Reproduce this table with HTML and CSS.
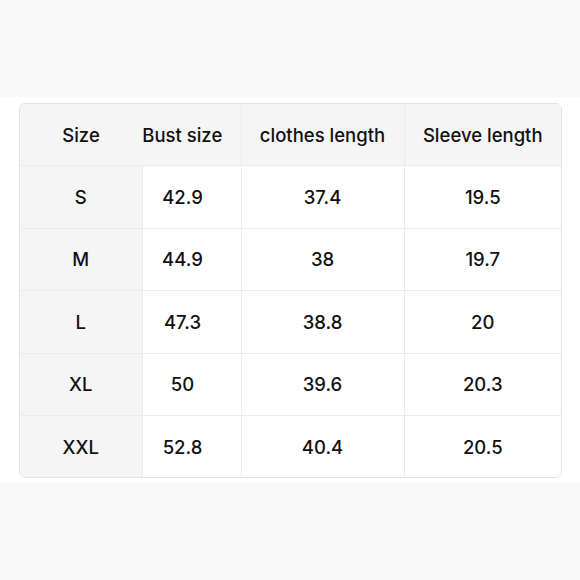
FILE: index.html
```html
<!DOCTYPE html>
<html>
<head>
<meta charset="utf-8">
<link rel="stylesheet" href="styles.css">
</head>
<body>
<div class="band top"></div>
<div class="sheet">
  <div class="frame">
    <table class="chart">
      <colgroup>
        <col class="c1"><col class="c2"><col class="c3"><col class="c4">
      </colgroup>
      <thead>
        <tr><th class="lead">Size</th><th class="bust">Bust size</th><th>clothes length</th><th class="last">Sleeve length</th></tr>
      </thead>
      <tbody>
        <tr><td class="lead">S</td><td class="bust">42.9</td><td>37.4</td><td class="last">19.5</td></tr>
        <tr><td class="lead">M</td><td class="bust">44.9</td><td>38</td><td class="last">19.7</td></tr>
        <tr><td class="lead">L</td><td class="bust">47.3</td><td>38.8</td><td class="last">20</td></tr>
        <tr><td class="lead">XL</td><td class="bust">50</td><td>39.6</td><td class="last">20.3</td></tr>
        <tr class="end"><td class="lead">XXL</td><td class="bust">52.8</td><td>40.4</td><td class="last">20.5</td></tr>
      </tbody>
    </table>
  </div>
</div>
<div class="band bottom"></div>
</body>
</html>
```
FILE: styles.css
```css
html, body {
  margin: 0;
  padding: 0;
  height: 100%;
}
body {
  display: flex;
  flex-direction: column;
  background: #f8f8f8;
  font-family: "Inter", "Liberation Sans", sans-serif;
  color: #111111;
}
.band.top {
  height: 97px;
  background: #f8f8f8;
}
.sheet {
  background: #ffffff;
  padding: 6px 18px 5px 19px;
}
.band.bottom {
  flex: 1;
  background: #f8f8f8;
}
.frame {
  border: 1px solid #e2e2e2;
  border-radius: 6px;
  overflow: hidden;
}
.chart {
  width: 100%;
  border-collapse: collapse;
  table-layout: fixed;
}
.c1 { width: 122px; }
.c2 { width: 99px; }
.c3 { width: 163px; }
.c4 { width: auto; }
.chart th, .chart td {
  height: 61.4px;
  padding: 0;
  text-align: center;
  white-space: nowrap;
  font-size: 18.5px;
  font-weight: 500;
  border-right: 1px solid #ececec;
  border-bottom: 1px solid #ececec;
  background: #ffffff;
}
.chart th {
  background: #f5f5f5;
}
.chart th.lead {
  border-right: none;
}
.chart .bust {
  padding-right: 18px;
}
.chart td.lead {
  background: #f5f5f5;
}
.chart .last {
  border-right: none;
}
.chart tr.end td {
  border-bottom: none;
}
```
